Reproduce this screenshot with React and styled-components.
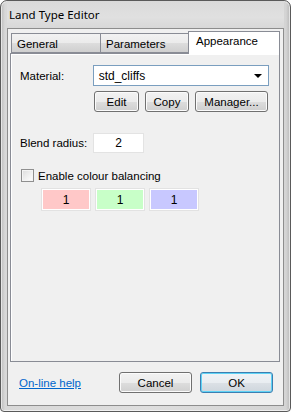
import React, { useState } from "react";
import styled, { createGlobalStyle } from "styled-components";

const GlobalStyle = createGlobalStyle`
  html, body {
    margin: 0;
    padding: 0;
    background: #ffffff;
  }
  body {
    font-family: "Liberation Sans", Arial, sans-serif;
    font-size: 11px;
    color: #000;
  }
`;

const tabs = ["General", "Parameters", "Appearance"];

const balance = [
  { value: 1, colour: "#ffc8c8" },
  { value: 1, colour: "#c8ffc8" },
  { value: 1, colour: "#c8c8ff" },
];

const App = () => {
  const [active, setActive] = useState(2);
  const [balancing, setBalancing] = useState(false);

  return (
    <>
      <GlobalStyle />
      <Window>
        <TitleBar>Land Type Editor</TitleBar>
        <Client>
          <TabRow>
            {tabs.map((t, i) => (
              <Tab key={t} selected={i === active} onClick={() => setActive(i)}>
                {t}
              </Tab>
            ))}
          </TabRow>
          <Panel>
            <FieldRow>
              <Label>Material:</Label>
              <Combo>
                <span>std_cliffs</span>
                <Arrow />
              </Combo>
            </FieldRow>
            <ButtonRow>
              <SmallButton w={45}>Edit</SmallButton>
              <SmallButton w={44}>Copy</SmallButton>
              <SmallButton w={73}>Manager...</SmallButton>
            </ButtonRow>
            <FieldRow top={21}>
              <Label>Blend radius:</Label>
              <NumberBox>2</NumberBox>
            </FieldRow>
            <CheckRow onClick={() => setBalancing(!balancing)}>
              <CheckBox>{balancing ? "✓" : ""}</CheckBox>
              Enable colour balancing
            </CheckRow>
            <SwatchRow>
              {balance.map((b, i) => (
                <Swatch key={i} colour={b.colour}>
                  {b.value}
                </Swatch>
              ))}
            </SwatchRow>
          </Panel>
          <Footer>
            <HelpLink href="#">On-line help</HelpLink>
            <DialogButtons>
              <DialogButton>Cancel</DialogButton>
              <DialogButton primary>OK</DialogButton>
            </DialogButtons>
          </Footer>
        </Client>
      </Window>
    </>
  );
};

export default App;

const Window = styled.div`
  box-sizing: border-box;
  width: 291px;
  height: 412px;
  display: flex;
  flex-direction: column;
  border: 1px solid #5a5a5a;
  border-radius: 7px 7px 4px 4px;
  background: linear-gradient(90deg, #bcbcbc 0px, #d8d8d8 4px, #dedede 50%, #d4d4d4 calc(100% - 4px), #b8b8b8 100%);
  padding: 0 6px 5px 6px;
  box-shadow: inset 0 0 0 1px rgba(255, 255, 255, 0.6);
`;

const TitleBar = styled.div`
  height: 27px;
  display: flex;
  align-items: center;
  padding-left: 2px;
  font-family: "Noto Sans", "DejaVu Sans", sans-serif;
  font-size: 11.5px;
  color: #000;
  background: linear-gradient(180deg, #dadada 0%, #e0e0e0 60%, #d8d8d8 100%);
`;

const Client = styled.div`
  flex: 1;
  display: flex;
  flex-direction: column;
  background: #f0f0f0;
  border: 1px solid #8d8d8d;
  padding: 1px 3px 0 2px;
`;

const TabRow = styled.div`
  display: flex;
  align-items: flex-end;
  height: 23px;
  padding-left: 1px;
  position: relative;
  z-index: 1;
`;

const Tab = styled.div`
  box-sizing: border-box;
  width: ${(p) => (p.selected ? "92px" : "90px")};
  height: ${(p) => (p.selected ? "23px" : "20px")};
  margin-bottom: ${(p) => (p.selected ? "-1px" : "0")};
  margin-left: ${(p) => (p.selected ? "-1px" : "0")};
  border: 1px solid #898c95;
  border-bottom: ${(p) => (p.selected ? "none" : "1px solid #898c95")};
  margin-right: -1px;
  background: ${(p) =>
    p.selected
      ? "#ffffff"
      : "linear-gradient(180deg, #f2f2f2 0%, #ebebeb 50%, #dddddd 51%, #cfcfcf 100%)"};
  padding: ${(p) => (p.selected ? "3px 0 0 7px" : "4px 0 0 5px")};
  font-size: 11.5px;
  cursor: default;
`;

const Panel = styled.div`
  box-sizing: border-box;
  height: 309px;
  border: 1px solid #898c95;
  background: #f0f0f0;
  box-shadow: inset 1px 1px 0 #ffffff;
  padding: 11px 10px 0 9px;
  display: flex;
  flex-direction: column;
`;

const FieldRow = styled.div`
  display: flex;
  align-items: center;
  margin-top: ${(p) => (p.top ? `${p.top}px` : "0")};
`;

const Label = styled.div`
  width: 73px;
  font-size: 11.5px;
`;

const Combo = styled.div`
  box-sizing: border-box;
  width: 177px;
  height: 21px;
  display: flex;
  align-items: center;
  justify-content: space-between;
  padding: 0 5px 0 5px;
  background: #ffffff;
  border: 1px solid #7a9ebf;
  font-size: 12px;
`;

const Arrow = styled.div`
  width: 0;
  height: 0;
  border-left: 4px solid transparent;
  border-right: 4px solid transparent;
  border-top: 4px solid #000;
  margin-right: 1px;
`;

const ButtonRow = styled.div`
  display: flex;
  gap: 6px;
  margin-top: 5px;
  padding-left: 74px;
`;

const SmallButton = styled.button`
  box-sizing: border-box;
  width: ${(p) => p.w}px;
  height: 21px;
  padding: 0;
  border: 1px solid #707070;
  border-radius: 3px;
  background: linear-gradient(180deg, #f2f2f2 0%, #ebebeb 50%, #dddddd 51%, #cfcfcf 100%);
  box-shadow: inset 0 0 0 1px #fbfbfb;
  font-family: "Liberation Sans", Arial, sans-serif;
  font-size: 11.5px;
  color: #000;
`;

const NumberBox = styled.div`
  box-sizing: border-box;
  width: 51px;
  height: 20px;
  display: flex;
  align-items: center;
  justify-content: center;
  background: #ffffff;
  border: 1px solid #e3e3e3;
  font-size: 12px;
`;

const CheckRow = styled.div`
  display: flex;
  align-items: center;
  gap: 4px;
  margin-top: 16px;
  padding-left: 1px;
  font-size: 11.5px;
  cursor: default;
`;

const CheckBox = styled.div`
  box-sizing: border-box;
  width: 13px;
  height: 13px;
  border: 1px solid #8f8f8f;
  background: linear-gradient(135deg, #dcdcdc 0%, #f2f2f2 60%, #ffffff 100%);
  box-shadow: inset 0 0 0 1px #f4f4f4;
  font-size: 10px;
  line-height: 11px;
  text-align: center;
`;

const SwatchRow = styled.div`
  display: flex;
  gap: 6px;
  margin-top: 7px;
  padding-left: 22px;
`;

const Swatch = styled.div`
  box-sizing: border-box;
  width: 48px;
  height: 21px;
  display: flex;
  align-items: center;
  justify-content: center;
  background: ${(p) => p.colour};
  border: 1px solid #ffffff;
  outline: 1px solid #e2e2e2;
  font-size: 12px;
`;

const Footer = styled.div`
  flex: 1;
  display: flex;
  align-items: center;
  justify-content: space-between;
  padding: 0 7px 2px 9px;
`;

const HelpLink = styled.a`
  color: #0066cc;
  text-decoration: underline;
  font-size: 11.5px;
`;

const DialogButtons = styled.div`
  display: flex;
  gap: 8px;
`;

const DialogButton = styled.button`
  box-sizing: border-box;
  width: 73px;
  height: 21px;
  padding: 0;
  border: 1px solid ${(p) => (p.primary ? "#3c7fb1" : "#707070")};
  border-radius: 3px;
  background: ${(p) =>
    p.primary
      ? "linear-gradient(180deg, #f0f3f6 0%, #e9edf1 50%, #dce1e6 51%, #ced6dd 100%)"
      : "linear-gradient(180deg, #f2f2f2 0%, #ebebeb 50%, #dddddd 51%, #cfcfcf 100%)"};
  box-shadow: inset 0 0 0 1px ${(p) => (p.primary ? "#5fd3f6" : "#fbfbfb")};
  font-family: "Liberation Sans", Arial, sans-serif;
  font-size: 11.5px;
  color: #000;
`;
